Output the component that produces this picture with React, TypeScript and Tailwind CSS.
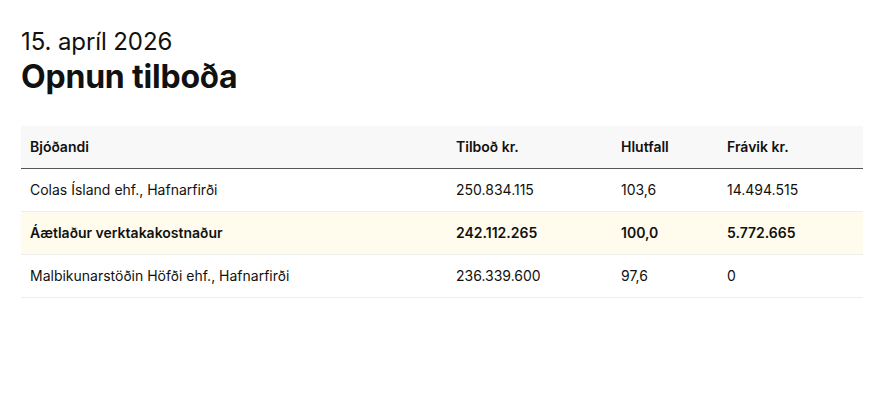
const rows = [
  { name: "Colas Ísland ehf., Hafnarfirði", bid: "250.834.115", ratio: "103,6", diff: "14.494.515" },
  { name: "Áætlaður verktakakostnaður", bid: "242.112.265", ratio: "100,0", diff: "5.772.665", estimate: true },
  { name: "Malbikunarstöðin Höfði ehf., Hafnarfirði", bid: "236.339.600", ratio: "97,6", diff: "0" },
];

export default function App() {
  return (
    <div className="min-h-[393px] w-[873px] bg-white px-[21px] pt-[28px] text-[#111] font-['Inter',sans-serif]">
      <p className="text-[24px] leading-[28px] tracking-[-0.1px]">15. apríl 2026</p>
      <h1 className="mt-[2px] text-[32px] font-bold leading-[38px] tracking-[-0.2px]">Opnun tilboða</h1>

      <table className="mt-[30px] w-[842px] table-fixed border-collapse text-[14px]">
        <colgroup>
          <col className="w-[426px]" />
          <col className="w-[165px]" />
          <col className="w-[106px]" />
          <col className="w-[145px]" />
        </colgroup>
        <thead>
          <tr className="h-[42px] border-b border-[#555] bg-[#f8f8f8] text-left">
            <th className="px-[9px] font-semibold">Bjóðandi</th>
            <th className="px-[9px] font-semibold">Tilboð kr.</th>
            <th className="px-[9px] font-semibold">Hlutfall</th>
            <th className="px-[9px] font-semibold">Frávik kr.</th>
          </tr>
        </thead>
        <tbody>
          {rows.map((r) => (
            <tr
              key={r.name}
              className={
                r.estimate
                  ? "h-[43px] border-b border-[#eeeeee] bg-[#fffcee] font-semibold"
                  : "h-[43px] border-b border-[#eeeeee]"
              }
            >
              <td className="px-[9px]">{r.name}</td>
              <td className="px-[9px]">{r.bid}</td>
              <td className="px-[9px]">{r.ratio}</td>
              <td className="px-[9px]">{r.diff}</td>
            </tr>
          ))}
        </tbody>
      </table>
    </div>
  );
}
